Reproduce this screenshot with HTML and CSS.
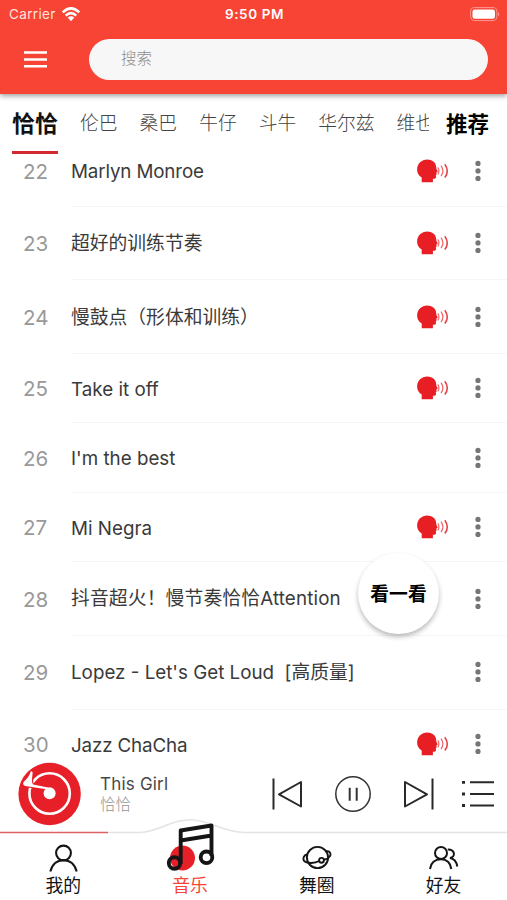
FILE: index.html
```html
<!DOCTYPE html>
<html lang="zh-CN">
<head>
<meta charset="utf-8">
<meta name="viewport" content="width=device-width, initial-scale=1">
<title>音乐</title>
<link rel="stylesheet" href="styles.css">
</head>
<body>
<svg class="defs" aria-hidden="true">
  <symbol id="voice" viewBox="0 0 32 24">
    <path fill="#e71f25" d="M4.700 23.300V18.500C1.600 16.800.1 13.900.1 10.600.1 4.700 4.600.5 10.200.5c4.800 0 8.700 2.800 9 7.400l.1 1.700 1.300 2.700c.2.500 0 .8-1.100 1v2.400l-.8.700.3.800c.3 1.900-.6 2.600-3.100 2.600v3.500z"/>
    <path fill="none" stroke="#ee6468" stroke-width="1.200" d="M20.800 8.300q2.300 3.500 0 7M24 6.700q3.800 5.200 0 10.400"/>
    <path fill="none" stroke="#e2474c" stroke-width="1.600" d="M27.800 5.200q5 6.800 0 13.400"/>
  </symbol>
  <symbol id="more" viewBox="0 0 6 22">
    <g fill="#757575"><circle cx="3" cy="3.400" r="2.600"/><circle cx="3" cy="10.900" r="2.600"/><circle cx="3" cy="18.400" r="2.600"/></g>
  </symbol>
</svg>
<div class="app">
  <header class="header">
    <div class="status">
      <div class="carrier"><span>Carrier</span>
        <svg width="20" height="15" viewBox="0 0 20 15"><g fill="none" stroke="#fff" stroke-width="2.500"><path d="M1.700 5.300Q10-2.600 18.300 5.300"/><path d="M4.700 8.600Q10 3.600 15.300 8.600"/></g><path fill="#fff" d="M6.700 10.600q3.300-2.800 6.600 0L10 14.200z"/></svg>
      </div>
      <span class="clock">9:50 PM</span>
      <svg class="battery" width="30" height="15" viewBox="0 0 30 15"><rect x=".6" y=".6" width="26.300" height="13" rx="4" fill="none" stroke="#fff" stroke-opacity=".45"/><rect x="2.500" y="2.500" width="22.500" height="9.200" rx="2.200" fill="#fff"/><path d="M28.200 5q2 2.200 0 4.400z" fill="#fff" fill-opacity=".55"/></svg>
    </div>
    <div class="toolbar">
      <svg width="23" height="17" viewBox="0 0 23 17"><path d="M0 1.500h23M0 8.500h23M0 15.200h23" stroke="#fff" stroke-width="2.500"/></svg>
      <div class="search">搜索</div>
    </div>
  </header>

  <nav class="tabs">
    <div class="tab-scroll">
      <span class="tab active">恰恰</span><span class="tab">伦巴</span><span class="tab">桑巴</span><span class="tab">牛仔</span><span class="tab">斗牛</span><span class="tab">华尔兹</span><span class="tab">维也</span>
    </div>
    <span class="recommend">推荐</span>
  </nav>

  <main class="list">
    <div class="row first"><span class="num">22</span><div class="song"><span class="title snug">Marlyn Monroe</span><svg class="voice"><use href="#voice"/></svg><svg class="more"><use href="#more"/></svg></div></div>
    <div class="row tall"><span class="num">23</span><div class="song"><span class="title">超好的训练节奏</span><svg class="voice"><use href="#voice"/></svg><svg class="more"><use href="#more"/></svg></div></div>
    <div class="row tall"><span class="num">24</span><div class="song"><span class="title han">慢鼓点（形体和训练）</span><svg class="voice"><use href="#voice"/></svg><svg class="more"><use href="#more"/></svg></div></div>
    <div class="row"><span class="num">25</span><div class="song"><span class="title low">Take it off</span><svg class="voice"><use href="#voice"/></svg><svg class="more"><use href="#more"/></svg></div></div>
    <div class="row"><span class="num">26</span><div class="song"><span class="title low">I'm the best</span><svg class="more"><use href="#more"/></svg></div></div>
    <div class="row"><span class="num">27</span><div class="song"><span class="title low">Mi Negra</span><svg class="voice"><use href="#voice"/></svg><svg class="more"><use href="#more"/></svg></div></div>
    <div class="row tall"><span class="num">28</span><div class="song"><span class="title wide">抖音超火！慢节奏恰恰Attention</span><svg class="more"><use href="#more"/></svg></div></div>
    <div class="row tall"><span class="num">29</span><div class="song"><span class="title">Lopez - Let's Get Loud&nbsp; [高质量]</span><svg class="more"><use href="#more"/></svg></div></div>
    <div class="row"><span class="num">30</span><div class="song"><span class="title snug low">Jazz ChaCha</span><svg class="voice"><use href="#voice"/></svg><svg class="more"><use href="#more"/></svg></div></div>
  </main>

  <button class="floating">看一看</button>

  <section class="player">
    <svg class="disc" width="64" height="64" viewBox="0 0 64 64"><circle cx="31.600" cy="32" r="31.200" fill="#e71f28"/><circle cx="31.600" cy="31.500" r="20.200" fill="none" stroke="#fff" stroke-width="2.600"/><path d="M12.800 9C11.500 14.500 8.500 17 5.800 19.800 4.600 21.500 5 23.500 7.200 24L30 27.500V25.600L15.200 22.600C13 19.500 14.500 15.500 14.600 10z" fill="#fff" stroke="#e71f28" stroke-width="2" stroke-linejoin="round"/><path d="M12.800 9C11.500 14.500 8.500 17 5.800 19.800 4.600 21.500 5 23.500 7.200 24L30 27.500V25.600L15.200 22.600C13 19.500 14.500 15.500 14.600 10z" fill="#fff"/><circle cx="31.600" cy="31.300" r="6" fill="#fff"/></svg>
    <div class="now"><div class="track">This Girl</div><div class="style">恰恰</div></div>
    <div class="controls">
      <svg width="31" height="34" viewBox="0 0 31 34"><g fill="none" stroke="#292929" stroke-width="2" stroke-linejoin="round"><path d="M1.500 1.500v31"/><path d="M29 5v24.500L7 17.300z"/></g></svg>
      <svg width="38" height="38" viewBox="0 0 38 38"><g fill="none" stroke="#333"><circle cx="19" cy="19" r="17.200" stroke-width="1.500"/><path stroke-width="2" d="M15.700 12.700v13M22.700 12.700v13"/></g></svg>
      <svg width="31" height="34" viewBox="0 0 31 34"><g fill="none" stroke="#292929" stroke-width="2" stroke-linejoin="round"><path d="M29.500 1.500v31"/><path d="M2 5v24.500L24 17.300z"/></g></svg>
      <svg class="queue" width="34" height="30" viewBox="0 0 34 30"><path d="M9 3.300h24M9 15h24M9 26.500h24" stroke="#292929" stroke-width="2"/><path d="M1 3.300h3M1 15h3M1 26.500h3" stroke="#292929" stroke-width="2.800"/></svg>
    </div>
  </section>

  <footer class="bottom">
    <svg class="edge" width="507" height="16" viewBox="0 0 507 16"><path d="M0 13.500H138C158 13.500 170 .8 190 .8S222 13.500 245 13.500H507V16H0z" fill="#fff"/><path d="M108 13.500H138C158 13.500 170 .8 190 .8S222 13.500 245 13.500H507" fill="none" stroke="#e4e4e4" stroke-width="1.600"/><path d="M0 13.500H108" stroke="#df6165" stroke-width="1.300"/></svg>
    <div class="item"><svg class="icon" width="30" height="29" viewBox="0 0 30 29"><g fill="none" stroke="#151515" stroke-width="2.100"><circle cx="15.500" cy="9" r="7.400"/><path d="M2.300 27.500C4.500 19.500 9 16.300 15.500 16.300S26.500 19.500 28.700 27.500"/></g></svg><span>我的</span></div>
    <div class="item current"><svg class="icon note" width="50" height="50" viewBox="0 0 50 50"><circle cx="17.500" cy="35" r="12.500" fill="#e71f28"/><g fill="none" stroke="#151515" stroke-width="3.900" stroke-linejoin="round"><circle cx="9.500" cy="40" r="5.700"/><circle cx="41.500" cy="34.300" r="5.800"/><path d="M15.700 41V7.500L46.500 2.500V33M15.700 17.500l30.800-5"/></g></svg><span>音乐</span></div>
    <div class="item"><svg class="icon" width="32" height="28" viewBox="0 0 32 28"><g fill="none" stroke="#151515" stroke-width="1.900"><circle cx="16.500" cy="12.500" r="10.600"/><path d="M6.500 9.300C3 10 1.500 13 3 15.800 5.500 18.500 13.500 18.800 18.200 16M22.500 14.800C26 14.300 29 12 29.500 10 29.800 7 27.500 5.500 25 6.500"/><circle cx="20.500" cy="15.300" r="2.400" fill="#fff"/></g></svg><span>舞圈</span></div>
    <div class="item"><svg class="icon" width="32" height="28" viewBox="0 0 32 28"><g fill="none" stroke="#151515" stroke-width="2"><circle cx="13" cy="8" r="6"/><path d="M2 24C3 17.300 7.500 14.300 13 14.300S22.300 17.300 23.300 24M19.800 4.500C27 4.300 28 11.800 22 13 26 13.500 28.500 17 29.300 21.500"/></g></svg><span>好友</span></div>
  </footer>
</div>
</body>
</html>
```

FILE: styles.css
```css
* { box-sizing: border-box; }
body {
  margin: 0;
  background: #fff;
  font-family: Inter, "Noto Sans CJK SC", sans-serif;
}
.defs { position: absolute; width: 0; height: 0; }
.app {
  position: relative;
  display: flex;
  flex-direction: column;
  width: 507px;
  height: 900px;
  overflow: hidden;
  background: #fff;
}
svg { display: block; flex: none; }

.header {
  position: relative;
  z-index: 2;
  flex: none;
  height: 94px;
  background: #f74435;
  box-shadow: 0 2px 5px rgba(0, 0, 0, .38);
}
.status {
  display: grid;
  grid-template-columns: 1fr auto 1fr;
  align-items: center;
  height: 28px;
  padding: 0 7px 0 9px;
  color: #fff;
  font-size: 13.500px;
}
.carrier { display: flex; align-items: center; gap: 5px; color: #ffe3df; letter-spacing: .35px; }
.clock { font-weight: 600; letter-spacing: .6px; }
.battery { justify-self: end; }
.toolbar {
  display: flex;
  align-items: center;
  gap: 42px;
  height: 41px;
  margin-top: 11px;
  padding: 0 19px 0 24px;
}
.search {
  flex: 1;
  height: 41px;
  padding-left: 32px;
  border-radius: 21px;
  background: #f7f7f7;
  color: #8c8c8c;
  font-size: 15.500px;
  font-weight: 300;
  line-height: 40px;
}

.tabs { display: flex; flex: none; height: 60px; padding-left: 12px; }
.tab-scroll { display: flex; gap: 22px; width: 417px; overflow: hidden; }
.tab {
  flex: none;
  height: 60px;
  color: #444;
  font-size: 18.800px;
  font-weight: 300;
  line-height: 59px;
}
.tab.active {
  border-bottom: 3px solid #d3282f;
  color: #111;
  font-size: 23px;
  font-weight: 700;
  line-height: 60px;
}
.recommend {
  margin-left: 17px;
  color: #000;
  font-size: 21.500px;
  font-weight: 700;
  line-height: 60px;
}

.list { flex: none; height: 604px; overflow: hidden; }
.row { display: flex; height: 69.500px; }
.row.first { margin-top: -17px; }
.row.tall { height: 73.700px; }
.num {
  display: flex;
  align-items: center;
  width: 71px;
  padding-left: 23px;
  color: #999;
  font-size: 20.500px;
  font-weight: 400;
}
.song {
  display: flex;
  flex: 1;
  align-items: center;
  gap: 26px;
  padding-right: 26px;
  border-bottom: 1px solid #f6f6f6;
}
.title {
  flex: 1;
  padding-top: 2px;
  color: #3a3a3a;
  font-size: 18.800px;
  line-height: 28px;
  white-space: nowrap;
}
.title.snug { letter-spacing: -.15px; }
.title.wide { padding-top: 0; letter-spacing: .14px; }
.title.low { padding-top: 3px; }
.title.han { padding: 0 0 2px; font-family: "Noto Sans CJK SC", sans-serif; }
.voice { width: 32px; height: 24px; }
.more { width: 6px; height: 22px; }

.floating {
  position: absolute;
  z-index: 3;
  top: 553px;
  left: 358px;
  width: 81px;
  height: 81px;
  padding: 2px 0 0;
  border: 0;
  border-radius: 50%;
  background: #fff;
  box-shadow: 0 3px 5px rgba(0, 0, 0, .27);
  color: #000;
  font: 700 18.800px/79px Inter, "Noto Sans CJK SC", sans-serif;
}

.player {
  display: flex;
  flex: none;
  align-items: center;
  height: 75px;
  padding: 0 12px 4px 18px;
}
.now { flex: 1; padding-left: 18px; }
.track { color: #484848; font-size: 17px; line-height: 22px; letter-spacing: .2px; }
.style { color: #929292; font-size: 15.500px; font-weight: 300; line-height: 20px; }
.controls { display: flex; align-items: center; gap: 31px; }
.queue { margin-left: -4px; }

.bottom {
  position: relative;
  display: grid;
  grid-template-columns: repeat(4, 1fr);
  flex: none;
  height: 67px;
}
.edge { position: absolute; top: -14px; left: 0; }
.item {
  position: relative;
  display: flex;
  flex-direction: column;
  align-items: center;
  justify-content: flex-end;
  padding-bottom: 2px;
  color: #111;
  font-size: 17.800px;
  line-height: 25px;
}
.current { color: #f74435; }
.note { margin: -20px 0 0; }
```
